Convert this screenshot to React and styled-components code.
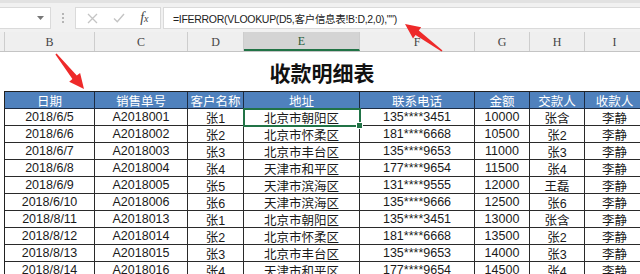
import React from "react";
import styled, { createGlobalStyle } from "styled-components";

const GlobalStyle = createGlobalStyle`
  html, body { margin: 0; padding: 0; background: #fff; }
  * { box-sizing: border-box; }
`;

const COLS = "5px 90px 93px 56px 116px 115px 55px 55px 60px";
const BODY_COLS = "90px 93px 56px 116px 115px 55px 55px 60px";
const GREEN = "#217346";

const headers = ["日期", "销售单号", "客户名称", "地址", "联系电话", "金额", "交款人", "收款人"];

const rows = [
  ["2018/6/5", "A2018001", "张1", "北京市朝阳区", "135****3451", "10000", "张含", "李静"],
  ["2018/6/6", "A2018002", "张2", "北京市怀柔区", "181****6668", "10500", "张2", "李静"],
  ["2018/6/7", "A2018003", "张3", "北京市丰台区", "135****9653", "11000", "张3", "李静"],
  ["2018/6/8", "A2018004", "张4", "天津市和平区", "177****9654", "11500", "张4", "李静"],
  ["2018/6/9", "A2018005", "张5", "天津市滨海区", "131****9555", "12000", "王磊", "李静"],
  ["2018/6/10", "A2018006", "张6", "天津市滨海区", "135****9666", "12500", "张6", "李静"],
  ["2018/8/11", "A2018013", "张1", "北京市朝阳区", "135****3451", "13000", "张含", "李静"],
  ["2018/8/12", "A2018014", "张2", "北京市怀柔区", "181****6668", "13500", "张2", "李静"],
  ["2018/8/13", "A2018015", "张3", "北京市丰台区", "135****9653", "14000", "张3", "李静"],
  ["2018/8/14", "A2018016", "张4", "天津市和平区", "177****9654", "14500", "张4", "李静"],
];

const Page = styled.div`
  position: relative;
  width: 640px;
  height: 274px;
  overflow: hidden;
  background: #fff;
  font-family: "Liberation Sans", "Noto Sans CJK SC", sans-serif;
`;

const FormulaBar = styled.div`
  height: 32px;
  background: #f1f1f1;
  border-top: 3px solid #e2e2e2;
  display: flex;
  align-items: center;
  padding-top: 1px;
`;

const Box = styled.div`
  height: 22px;
  background: #fff;
  border: 1px solid #dadada;
  display: flex;
  align-items: center;
`;

const NameBox = styled(Box)`
  width: 51px;
  border-left: none;
  justify-content: flex-end;
  padding-right: 6px;
`;

const Dots = styled.div`
  width: 24px;
  display: flex;
  flex-direction: column;
  align-items: center;
  gap: 2px;
  span {
    width: 2px;
    height: 2px;
    background: #b5b5b5;
  }
`;

const IconBox = styled(Box)`
  width: 86px;
  justify-content: space-around;
  padding: 0 4px;
`;

const Fx = styled.span`
  font-family: "Liberation Serif", serif;
  font-style: italic;
  font-size: 14px;
  color: #444;
  small { font-size: 10px; }
`;

const FormulaBox = styled(Box)`
  flex: 1;
  margin-left: 2px;
  border-right: none;
  padding-left: 9px;
  font-size: 10.5px;
  letter-spacing: -0.3px;
  color: #222;
  white-space: nowrap;
`;

const ColHeaders = styled.div`
  display: grid;
  grid-template-columns: ${COLS};
  height: 20px;
  background: #efefef;
  border-bottom: 1px solid #c4c4c4;
`;

const ColHead = styled.div`
  display: flex;
  align-items: center;
  justify-content: center;
  font-family: "Liberation Serif", serif;
  font-size: 12px;
  color: ${p => (p.$active ? "#2a5d3c" : "#444")};
  background: ${p => (p.$active ? "#d4d4d4" : "transparent")};
  border-right: 1px solid #cdcdcd;
  border-bottom: ${p => (p.$active ? `2px solid ${GREEN}` : "none")};
  padding-top: 2px;
`;

const Sheet = styled.div`
  padding-left: 4px;
`;

const Title = styled.div`
  height: 39px;
  display: flex;
  align-items: center;
  justify-content: center;
  width: 636px;
  font-family: "Noto Sans CJK SC", sans-serif;
  font-weight: 700;
  font-size: 21px;
  color: #111;
  padding-top: 1px;
`;

const Table = styled.div`
  display: grid;
  grid-template-columns: ${BODY_COLS};
  grid-auto-rows: 17px;
  border-left: 1px solid #222;
  border-top: 1px solid #222;
`;

const Cell = styled.div`
  position: relative;
  display: flex;
  align-items: center;
  justify-content: center;
  border-right: 1px solid ${p => (p.$head ? "#1c2c44" : "#2a2a2a")};
  border-bottom: 1px solid ${p => (p.$head ? "#1c2c44" : "#2a2a2a")};
  background: ${p => (p.$head ? "#4f81bd" : "#fff")};
  color: ${p => (p.$head ? "#fff" : "#1a1a1a")};
  font-size: 12.5px;
  white-space: nowrap;
  ${p =>
    p.$selected &&
    `
    outline: 2px solid ${GREEN};
    outline-offset: -1px;
    z-index: 1;
    &::after {
      content: "";
      position: absolute;
      right: -4px;
      bottom: -4px;
      width: 5px;
      height: 5px;
      background: ${GREEN};
      border: 1px solid #fff;
    }
  `}
`;

const Overlay = styled.svg`
  position: absolute;
  left: 0;
  top: 0;
  pointer-events: none;
`;

function arrowPoints(tx, ty, px, py) {
  const dx = px - tx;
  const dy = py - ty;
  const len = Math.hypot(dx, dy);
  const ux = dx / len;
  const uy = dy / len;
  const nx = -uy;
  const ny = ux;
  const L = 15;
  const hw = 7;
  const sw = 2.8;
  const tw = 0.8;
  const bx = px - ux * L;
  const by = py - uy * L;
  const pts = [
    [tx + nx * tw, ty + ny * tw],
    [bx + nx * sw, by + ny * sw],
    [bx + nx * hw, by + ny * hw],
    [px, py],
    [bx - nx * hw, by - ny * hw],
    [bx - nx * sw, by - ny * sw],
    [tx - nx * tw, ty - ny * tw],
  ];
  return pts.map(p => p.map(v => v.toFixed(1)).join(",")).join(" ");
}

export default function App() {
  const letters = ["", "B", "C", "D", "E", "F", "G", "H", "I"];
  return (
    <Page>
      <GlobalStyle />
      <FormulaBar>
        <NameBox>
          <svg width="7" height="4" viewBox="0 0 7 4">
            <path d="M0 0H7L3.5 4Z" fill="#777" />
          </svg>
        </NameBox>
        <Dots>
          <span />
          <span />
          <span />
        </Dots>
        <IconBox>
          <svg width="11" height="11" viewBox="0 0 11 11">
            <path d="M1 1L10 10M10 1L1 10" stroke="#c4c4c4" strokeWidth="1.3" />
          </svg>
          <svg width="12" height="10" viewBox="0 0 12 10">
            <path d="M1 5.5L4.3 8.8L11 1" stroke="#c4c4c4" strokeWidth="1.4" fill="none" />
          </svg>
          <Fx>
            f<small>x</small>
          </Fx>
        </IconBox>
        <FormulaBox>=IFERROR(VLOOKUP(D5,客户信息表!B:D,2,0),"")</FormulaBox>
      </FormulaBar>
      <ColHeaders>
        {letters.map((l, i) => (
          <ColHead key={i} $active={l === "E"}>
            {l}
          </ColHead>
        ))}
      </ColHeaders>
      <Sheet>
        <Title>收款明细表</Title>
        <Table>
          {headers.map(h => (
            <Cell key={h} $head>
              {h}
            </Cell>
          ))}
          {rows.map((r, ri) =>
            r.map((v, ci) => (
              <Cell key={ri + "-" + ci} $selected={ri === 0 && ci === 3}>
                {v}
              </Cell>
            ))
          )}
        </Table>
      </Sheet>
      <Overlay width="640" height="274">
        <polygon points={arrowPoints(442, 51, 405, 24)} fill="#ee2a2a" />
        <polygon points={arrowPoints(56, 54, 84, 89)} fill="#ee2a2a" />
      </Overlay>
    </Page>
  );
}
